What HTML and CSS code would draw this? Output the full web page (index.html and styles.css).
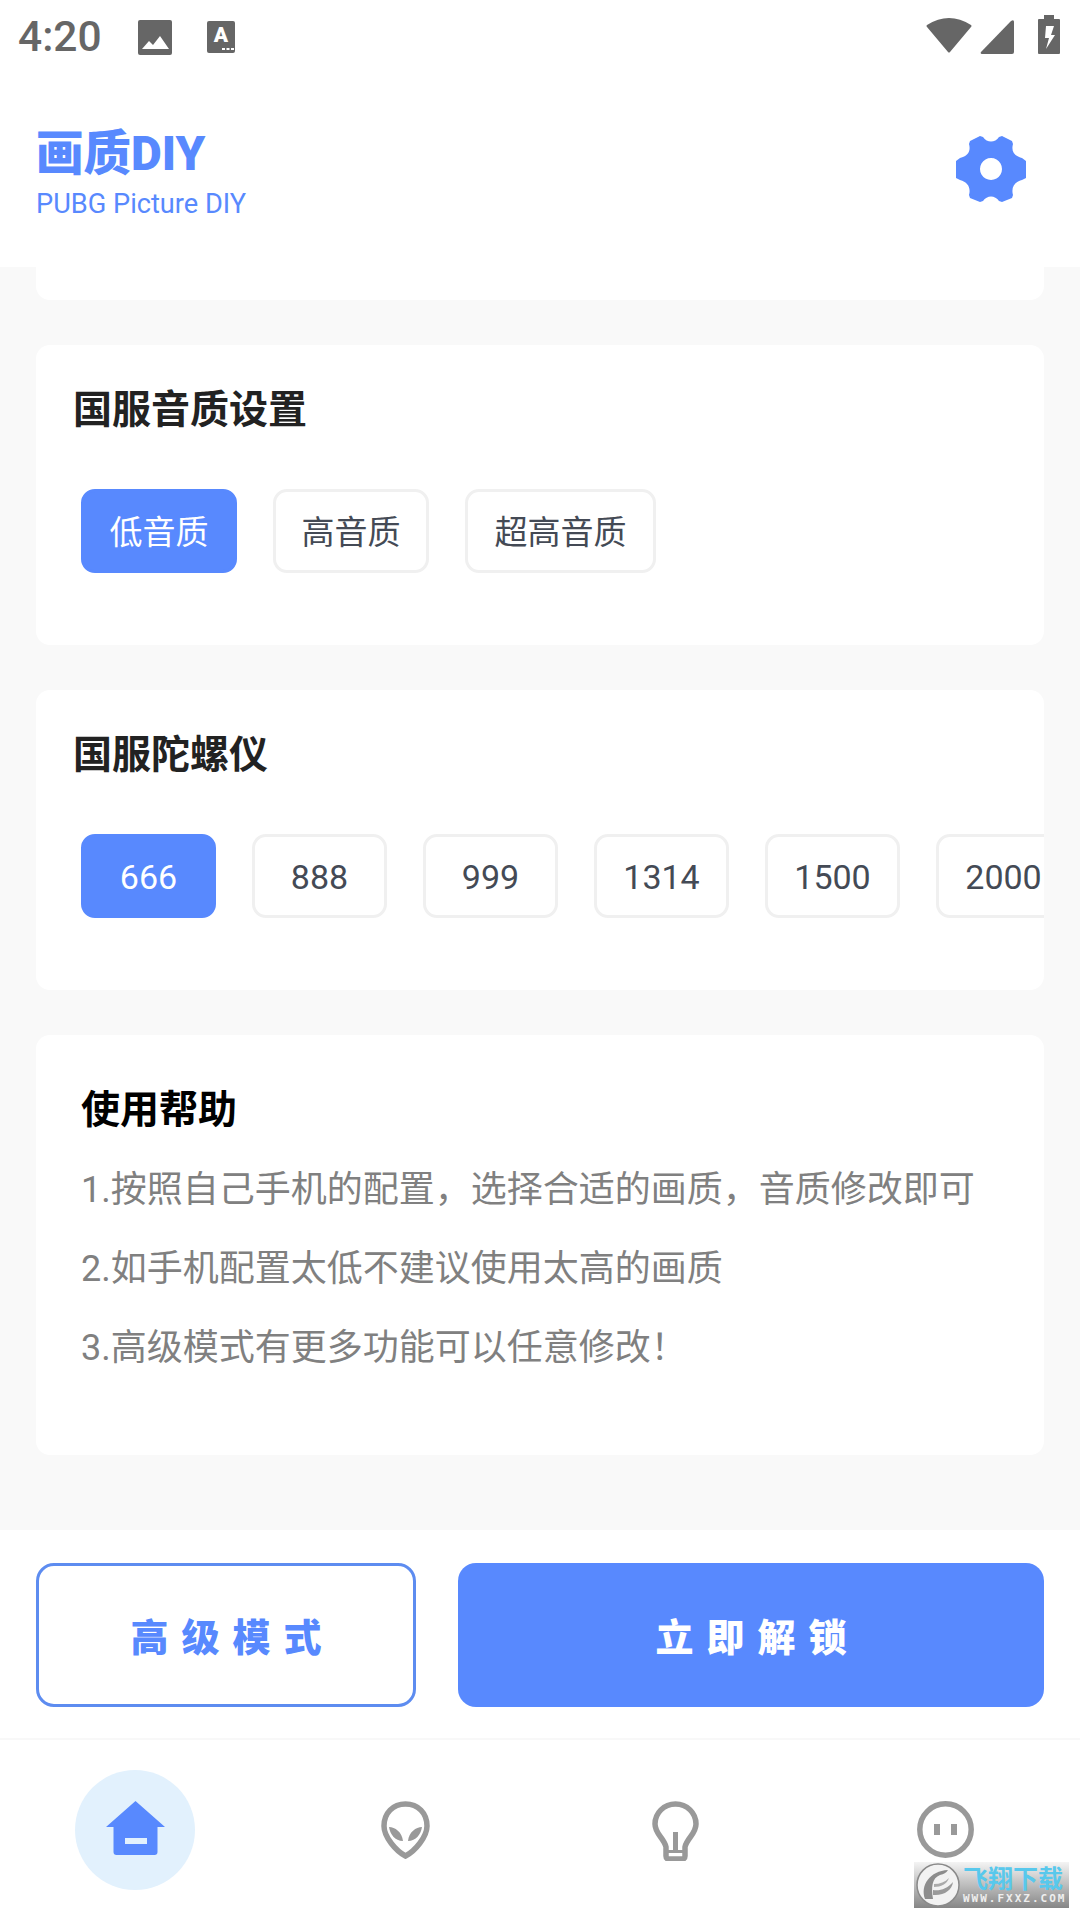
FILE: index.html
```html
<!DOCTYPE html>
<html lang="zh-CN">
<head>
    <meta charset="UTF-8">
    <meta name="viewport" content="width=device-width, initial-scale=1.0">
    <title>画质DIY</title>
    <link rel="stylesheet" href="styles.css">
</head>
<body>

    <div class="statusbar">
        <div class="status-left">
            <span class="time">4:20</span>
            <svg class="st-photo" viewBox="0 0 34 35" width="34" height="35"><rect width="34" height="35" rx="2" fill="#666"/><path d="M4 29l7-8 4 4 7-9 9 13z" fill="#fff"/></svg>
            <svg class="st-a" viewBox="0 0 28 32" width="28" height="32"><rect width="28" height="32" rx="2" fill="#666"/><text class="st-a-text" x="14" y="21" text-anchor="middle">A</text><path d="M15 27h3v2h-3zM19.500 27h3v2h-3zM24 27h3v2h-3z" fill="#fff"/></svg>
        </div>
        <div class="status-right">
            <svg class="st-wifi" viewBox="0 0 46 36" width="46" height="36"><path d="M1 8Q23-6 45 8q1 1 0 2L24 35q-1 1-2 0L1 10q-1-1 0-2z" fill="#666"/></svg>
            <svg class="st-signal" viewBox="0 0 34 34" width="34" height="34"><path d="M34 2v30q0 2-2 2H2q-2 0-1-2L31 1q3-2 3 1z" fill="#666"/></svg>
            <svg class="st-batt" viewBox="0 0 22 39" width="22" height="39"><path d="M6 0h10v4h5q1 0 1 1v33q0 1-1 1H1q-1 0-1-1V5q0-1 1-1h5z" fill="#666"/><path d="M8 11h8l-3 9h4l-9 14 3-11H7z" fill="#fff"/></svg>
        </div>
    </div>

    <div class="header">
        <div>
            <h1 class="app-title">画质DIY</h1>
            <div class="app-sub">PUBG Picture DIY</div>
        </div>
        <svg class="gear" viewBox="0 0 70 66" width="70" height="66"><path fill-rule="evenodd" d="M24 0l3 1c4 6 12 6 16 0l3-1 10 5 1 3c-2 7 1 12 9 14l4 3v17l-4 2c-8 2-11 8-9 15l-1 3-10 4-3-1c-4-6-12-6-16 0l-3 1-10-4-1-3c2-7-1-13-9-15l-4-2V25l4-3c8-2 11-7 9-14l1-3zM35 22a11 11 0 1 0 .01 0z" fill="#5889fe"/></svg>
    </div>

    <div class="content">
        <div class="card card-cut"></div>

        <div class="card">
            <h2 class="card-title">国服音质设置</h2>
            <div class="options">
                <div class="opt opt-on">低音质</div>
                <div class="opt">高音质</div>
                <div class="opt opt-wide">超高音质</div>
            </div>
        </div>

        <div class="card">
            <h2 class="card-title">国服陀螺仪</h2>
            <div class="options options-num">
                <div class="opt opt-on">666</div>
                <div class="opt">888</div>
                <div class="opt">999</div>
                <div class="opt">1314</div>
                <div class="opt">1500</div>
                <div class="opt">2000</div>
            </div>
        </div>

        <div class="card help">
            <h2 class="help-title">使用帮助</h2>
            <p>1.按照自己手机的配置，选择合适的画质，音质修改即可</p>
            <p>2.如手机配置太低不建议使用太高的画质</p>
            <p>3.高级模式有更多功能可以任意修改！</p>
        </div>
    </div>

    <div class="actions">
        <div class="btn btn-line">高级模式</div>
        <div class="btn btn-fill">立即解锁</div>
    </div>

    <div class="tabbar">
        <div class="tab">
            <div class="tab-on">
                <svg viewBox="0 0 59 54" width="59" height="54"><path fill-rule="evenodd" d="M29.500 0L59 26H51.500V51q0 3-3 3H10.500q-3 0-3-3V26H0zM19 37v6H41V37z" fill="#5889fe"/></svg>
            </div>
        </div>
        <div class="tab">
            <svg viewBox="0 0 49 58" width="49" height="58"><path d="M24.500 3C12 3 3 12 3 25c0 11 12 25 21.500 30C34 50 46 36 46 25 46 12 37 3 24.500 3z" fill="none" stroke="#999" stroke-width="5.500"/><path d="M8 26c6 0 13 5 14 14C14 40 9 33 8 26zM41 26c-6 0-13 5-14 14 8 0 13-7 14-14z" fill="#999"/></svg>
        </div>
        <div class="tab">
            <svg viewBox="0 0 47 60" width="47" height="60"><path d="M23.500 3C12 3 3 12 3 23c0 10 9 14 11 23v9q0 3 3 3h13q3 0 3-3v-9c2-9 11-13 11-23C44 12 35 3 23.500 3z" fill="none" stroke="#999" stroke-width="5.500"/><path d="M21 31h5v18h-5zM14 49h19v3H14z" fill="#999"/></svg>
        </div>
        <div class="tab">
            <svg viewBox="0 0 57 57" width="57" height="57"><circle cx="28.500" cy="28.500" r="25.700" fill="none" stroke="#999" stroke-width="5.500"/><path d="M17 23h6v11h-6zM34 23h6v11h-6z" fill="#999"/></svg>
        </div>
    </div>

    <div class="stamp">
        <svg viewBox="0 0 44 44" width="44" height="44"><circle cx="22" cy="22" r="21" fill="#f2f2f2" stroke="#8a8a8a" stroke-width="1.500"/><path d="M9 36C4 22 14 8 32 7c-2 3-4 4-8 5-8 3-9 12-7 24z" fill="#8c8c8c"/><path d="M17 27c7 1 14-1 20-8-1 8-9 14-20 13z" fill="#9a9a9a"/><path d="M18 21c6 0 11-2 15-6-2 6-8 9-15 9z" fill="#aaa"/></svg>
        <div class="stamp-text">
            <div class="stamp-cn">飞翔下载</div>
            <div class="stamp-url">WWW.FXXZ.COM</div>
        </div>
    </div>

</body>
</html>
```
FILE: styles.css
```css
* {
    box-sizing: border-box;
}
html, body {
    margin: 0;
    padding: 0;
}
body {
    position: relative;
    width: 1080px;
    height: 1920px;
    overflow: hidden;
    background-color: #f9f9f9;
    font-family: Roboto, "Noto Sans CJK SC", sans-serif;
    display: flex;
    flex-direction: column;
}
.statusbar {
    height: 72px;
    flex-shrink: 0;
    background-color: #fff;
    display: flex;
    justify-content: space-between;
    padding: 15px 20px 0 18px;
}
.status-left {
    display: flex;
    align-items: flex-start;
}
.time {
    font-size: 42.500px;
    line-height: 44px;
    font-weight: 500;
    color: #666;
    width: 120px;
}
.st-photo {
    margin-top: 5px;
}
.st-a {
    margin: 6px 0 0 35px;
}
.st-a-text {
    font-family: Roboto, sans-serif;
    font-size: 21px;
    font-weight: 900;
    fill: #fff;
}
.status-right {
    display: flex;
    align-items: flex-start;
}
.st-wifi {
    margin-top: 2px;
}
.st-signal {
    margin: 5px 0 0 8px;
}
.st-batt {
    margin-left: 24px;
}
.header {
    height: 195px;
    flex-shrink: 0;
    background-color: #fff;
    display: flex;
    justify-content: space-between;
    align-items: flex-start;
    padding: 0 54px 0 36px;
}
.app-title {
    margin: 59px 0 0 0;
    font-size: 47.500px;
    line-height: 46px;
    font-weight: 900;
    color: #5889fe;
}
.app-sub {
    margin-top: 12px;
    font-size: 27.200px;
    line-height: 30px;
    color: #5889fe;
}
.gear {
    margin-top: 64px;
}
.content {
    flex: 1;
    min-height: 0;
    padding: 0 36px;
}
.card {
    background-color: #fff;
    border-radius: 14px;
    margin-bottom: 45px;
    height: 300px;
    padding: 43px 0 0 37px;
    overflow: hidden;
}
.card-cut {
    height: 33px;
    padding: 0;
    border-radius: 0 0 14px 14px;
}
.card-title {
    margin: 0;
    font-size: 39px;
    line-height: 44px;
    font-weight: 700;
    color: #222;
}
.options {
    display: flex;
    gap: 36px;
    margin: 57px 0 0 8px;
}
.opt {
    height: 84px;
    padding: 0 25.500px 2px;
    display: flex;
    align-items: center;
    justify-content: center;
    flex-shrink: 0;
    border: 3px solid #f0f0f0;
    border-radius: 14px;
    background-color: #fff;
    font-size: 33px;
    color: #444a55;
}
.opt-wide {
    padding: 0 26.500px 2px;
}
.opt-on {
    background-color: #5889fe;
    border-color: #5889fe;
    color: #fff;
}
.options-num .opt {
    width: 135px;
    padding: 2px 0 0;
    font-size: 34px;
}
.help {
    height: 420px;
    padding: 53px 0 0 45px;
}
.help-title {
    margin: 0 0 19px 0;
    font-size: 39px;
    line-height: 44px;
    font-weight: 700;
    color: #000;
}
.help p {
    margin: 0;
    font-size: 36px;
    line-height: 79px;
    color: #808080;
}
.actions {
    height: 208px;
    flex-shrink: 0;
    background-color: #fff;
    display: flex;
    gap: 42px;
    padding: 33px 36px 0 36px;
}
.btn {
    height: 144px;
    border-radius: 18px;
    display: flex;
    align-items: center;
    justify-content: center;
    padding: 0 0 2px 13px;
    font-size: 38px;
    font-weight: 900;
    letter-spacing: 13px;
}
.btn-line {
    width: 380px;
    border: 3px solid #5d8cf0;
    color: #5889fe;
}
.btn-fill {
    width: 586px;
    background-color: #5889fe;
    color: #fff;
}
.tabbar {
    height: 182px;
    flex-shrink: 0;
    background-color: #fff;
    border-top: 2px solid #f8f8f8;
    display: flex;
}
.tab {
    flex: 1;
    display: flex;
    justify-content: center;
    align-items: flex-start;
    padding-top: 61px;
}
.tab-on {
    width: 120px;
    height: 120px;
    margin-top: -31px;
    padding-bottom: 4px;
    border-radius: 50%;
    background-color: #e2f1fd;
    display: flex;
    align-items: center;
    justify-content: center;
}
.stamp {
    position: absolute;
    left: 914px;
    top: 1862px;
    width: 155px;
    height: 46px;
    padding-left: 2px;
    background: linear-gradient(#f4f4f4, #868686);
    display: flex;
    align-items: center;
    gap: 3px;
}
.stamp-text {
    line-height: 1;
}
.stamp-cn {
    font-size: 25px;
    line-height: 27px;
    font-weight: 700;
    color: #58c8ec;
}
.stamp-url {
    font-family: "DejaVu Sans Mono", monospace;
    font-size: 11px;
    line-height: 11px;
    font-weight: 700;
    letter-spacing: 2px;
    color: #eee;
}
```
